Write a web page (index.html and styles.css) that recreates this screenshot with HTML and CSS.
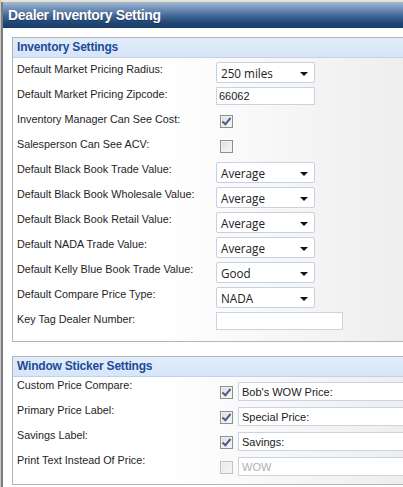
FILE: index.html
```html
<!DOCTYPE html>
<html>
<head>
<meta charset="utf-8">
<link rel="stylesheet" href="styles.css">
</head>
<body>
<div class="app">
  <div class="topstrip"></div>
  <div class="titlebar"><h1>Dealer Inventory Setting</h1></div>
  <div class="content">
    <section class="panel">
      <div class="panel-head">Inventory Settings</div>
      <div class="panel-body">
        <div class="row"><span class="label">Default Market Pricing Radius:</span><div class="select">250 miles<span class="arrow"></span></div></div>
        <div class="row"><span class="label">Default Market Pricing Zipcode:</span><div class="input">66062</div></div>
        <div class="row"><span class="label">Inventory Manager Can See Cost:</span><span class="cb checked cb-solo"></span></div>
        <div class="row"><span class="label">Salesperson Can See ACV:</span><span class="cb cb-solo"></span></div>
        <div class="row"><span class="label">Default Black Book Trade Value:</span><div class="select">Average<span class="arrow"></span></div></div>
        <div class="row"><span class="label">Default Black Book Wholesale Value:</span><div class="select">Average<span class="arrow"></span></div></div>
        <div class="row"><span class="label">Default Black Book Retail Value:</span><div class="select">Average<span class="arrow"></span></div></div>
        <div class="row"><span class="label">Default NADA Trade Value:</span><div class="select">Average<span class="arrow"></span></div></div>
        <div class="row"><span class="label">Default Kelly Blue Book Trade Value:</span><div class="select">Good<span class="arrow"></span></div></div>
        <div class="row"><span class="label">Default Compare Price Type:</span><div class="select">NADA<span class="arrow"></span></div></div>
        <div class="row"><span class="label">Key Tag Dealer Number:</span><div class="input wide"></div></div>
      </div>
    </section>
    <section class="panel panel2">
      <div class="panel-head">Window Sticker Settings</div>
      <div class="panel-body body2">
        <div class="row"><span class="label">Custom Price Compare:</span><span class="cb checked"></span><div class="input long">Bob's WOW Price:</div></div>
        <div class="row"><span class="label">Primary Price Label:</span><span class="cb checked"></span><div class="input long">Special Price:</div></div>
        <div class="row"><span class="label">Savings Label:</span><span class="cb checked"></span><div class="input long">Savings:</div></div>
        <div class="row"><span class="label">Print Text Instead Of Price:</span><span class="cb disabled"></span><div class="input long dis">WOW</div></div>
      </div>
    </section>
  </div>
</div>
</body>
</html>
```

FILE: styles.css
```css
html, body {
  margin: 0;
  padding: 0;
  background: #fff;
  overflow: hidden;
}
.app {
  width: 403px;
  height: 487px;
  position: relative;
  overflow: hidden;
  border-left: 1px solid #c9c9c9;
  box-sizing: border-box;
  box-shadow: inset 2px 0 0 #7d7d7d;
  font-family: "Liberation Sans", Arial, sans-serif;
}
.topstrip {
  height: 2px;
  background: #e6e2d6;
}
.titlebar {
  height: 26px;
  margin-left: 2px;
  background: linear-gradient(to bottom, #a3bad4 0%, #7896bb 22%, #44699a 52%, #214876 78%, #173d69 100%);
  display: flex;
  align-items: center;
}
.titlebar h1 {
  margin: 0 0 0 5px;
  font-size: 14px;
  font-weight: bold;
  color: #fff;
  letter-spacing: -0.35px;
  text-shadow: 0 1px 1px rgba(0,0,0,0.35);
}
.content {
  padding: 9px 0 0 11px;
}
.panel {
  width: 420px;
  border: 1px solid #b4b4b4;
  border-right: none;
}
.panel2 {
  margin-top: 14px;
}
.panel-head {
  height: 19px;
  background: linear-gradient(to bottom, #e2edfb, #d6e5f7);
  border-bottom: 1px solid #bfd2ea;
  color: #1c4c98;
  font-weight: bold;
  font-size: 12px;
  letter-spacing: -0.2px;
  line-height: 19px;
  padding-left: 4px;
}
.panel-body {
  padding: 4px 0 4px 4px;
  background: linear-gradient(to right, #ffffff 0%, #ffffff 35%, #ececec 100%);
}
.body2 {
  padding: 0 0 7px 4px;
}
.row {
  height: 25px;
  display: flex;
  align-items: flex-start;
}
.label {
  width: 199px;
  flex: none;
  font-size: 10.8px;
  line-height: 14px;
  padding-top: 0;
  color: #1e1e1e;
}
.body2 .label {
  padding-top: 1px;
  width: 203px;
}
.select {
  width: 99px;
  height: 21px;
  box-sizing: border-box;
  border: 1px solid #c6d2e2;
  border-radius: 2px;
  background: #fff;
  font-family: "Open Sans", sans-serif;
  font-size: 11.7px;
  line-height: 21px;
  padding-left: 4px;
  color: #222;
  position: relative;
}
.arrow {
  position: absolute;
  right: 6px;
  top: 9px;
  width: 0;
  height: 0;
  border-left: 4px solid transparent;
  border-right: 4px solid transparent;
  border-top: 4px solid #111;
}
.input {
  width: 99px;
  height: 18px;
  box-sizing: border-box;
  border: 1px solid #c8d4e4;
  background: #fff;
  font-size: 11px;
  line-height: 16px;
  padding-left: 2px;
  color: #222;
}
.input.wide {
  width: 127px;
}
.input.long {
  width: 200px;
  height: 19px;
  line-height: 18px;
  padding-left: 3px;
  margin-top: 5px;
  margin-left: 5px;
}
.input.dis {
  color: #b0b0b0;
}
.cb {
  width: 13px;
  height: 13px;
  box-sizing: border-box;
  border: 1px solid #8e8f8f;
  background: linear-gradient(135deg, #dcdcdc, #fbfbfb);
  box-shadow: inset 0 0 0 1px #f1f1f1;
  margin-top: 9px;
  position: relative;
  flex: none;
}
.cb-solo {
  margin-left: 4px;
  margin-top: 3px;
}
.cb.checked::after {
  content: "";
  position: absolute;
  left: 3px;
  top: 0px;
  width: 3px;
  height: 7px;
  border-right: 2px solid #4d5d88;
  border-bottom: 2px solid #4d5d88;
  transform: rotate(40deg);
}
.cb.disabled {
  border-color: #c2c2c2;
  background: linear-gradient(135deg, #e6e6e6, #f6f6f6);
}
```
